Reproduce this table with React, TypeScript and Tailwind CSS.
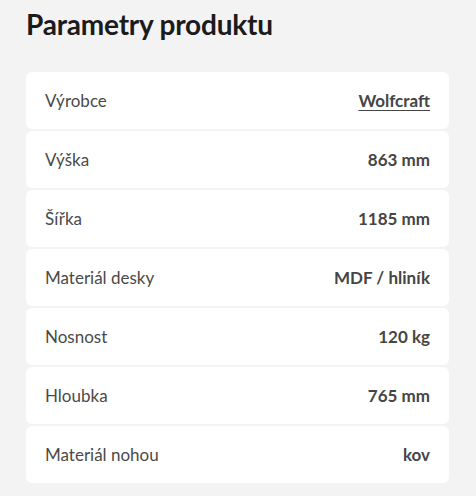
import React from "react";

const rows: [string, string, boolean?][] = [
  ["Výrobce", "Wolfcraft", true],
  ["Výška", "863 mm"],
  ["Šířka", "1185 mm"],
  ["Materiál desky", "MDF / hliník"],
  ["Nosnost", "120 kg"],
  ["Hloubka", "765 mm"],
  ["Materiál nohou", "kov"],
];

export default function App() {
  return (
    <div className="min-h-[496px] w-[476px] bg-[#f3f3f3] px-[26px] pt-[7px] pb-[13px]" style={{ fontFamily: "Lato, 'Noto Sans', sans-serif" }}>
      <h2 className="text-[28px] font-bold leading-[35px] text-[#1b1b1b] tracking-[-0.2px]">Parametry produktu</h2>
      <div className="mt-[30px] flex w-[423px] flex-col gap-[2px]">
        {rows.map(([k, v, link]) => (
          <div key={k} className="flex h-[57px] items-center justify-between rounded-[6px] bg-white px-[19px] text-[17px]">
            <span className="text-[#4a4a4a]">{k}</span>
            <span className={"font-bold text-[#454545] " + (link ? "underline underline-offset-[3px]" : "")}>{v}</span>
          </div>
        ))}
      </div>
    </div>
  );
}
